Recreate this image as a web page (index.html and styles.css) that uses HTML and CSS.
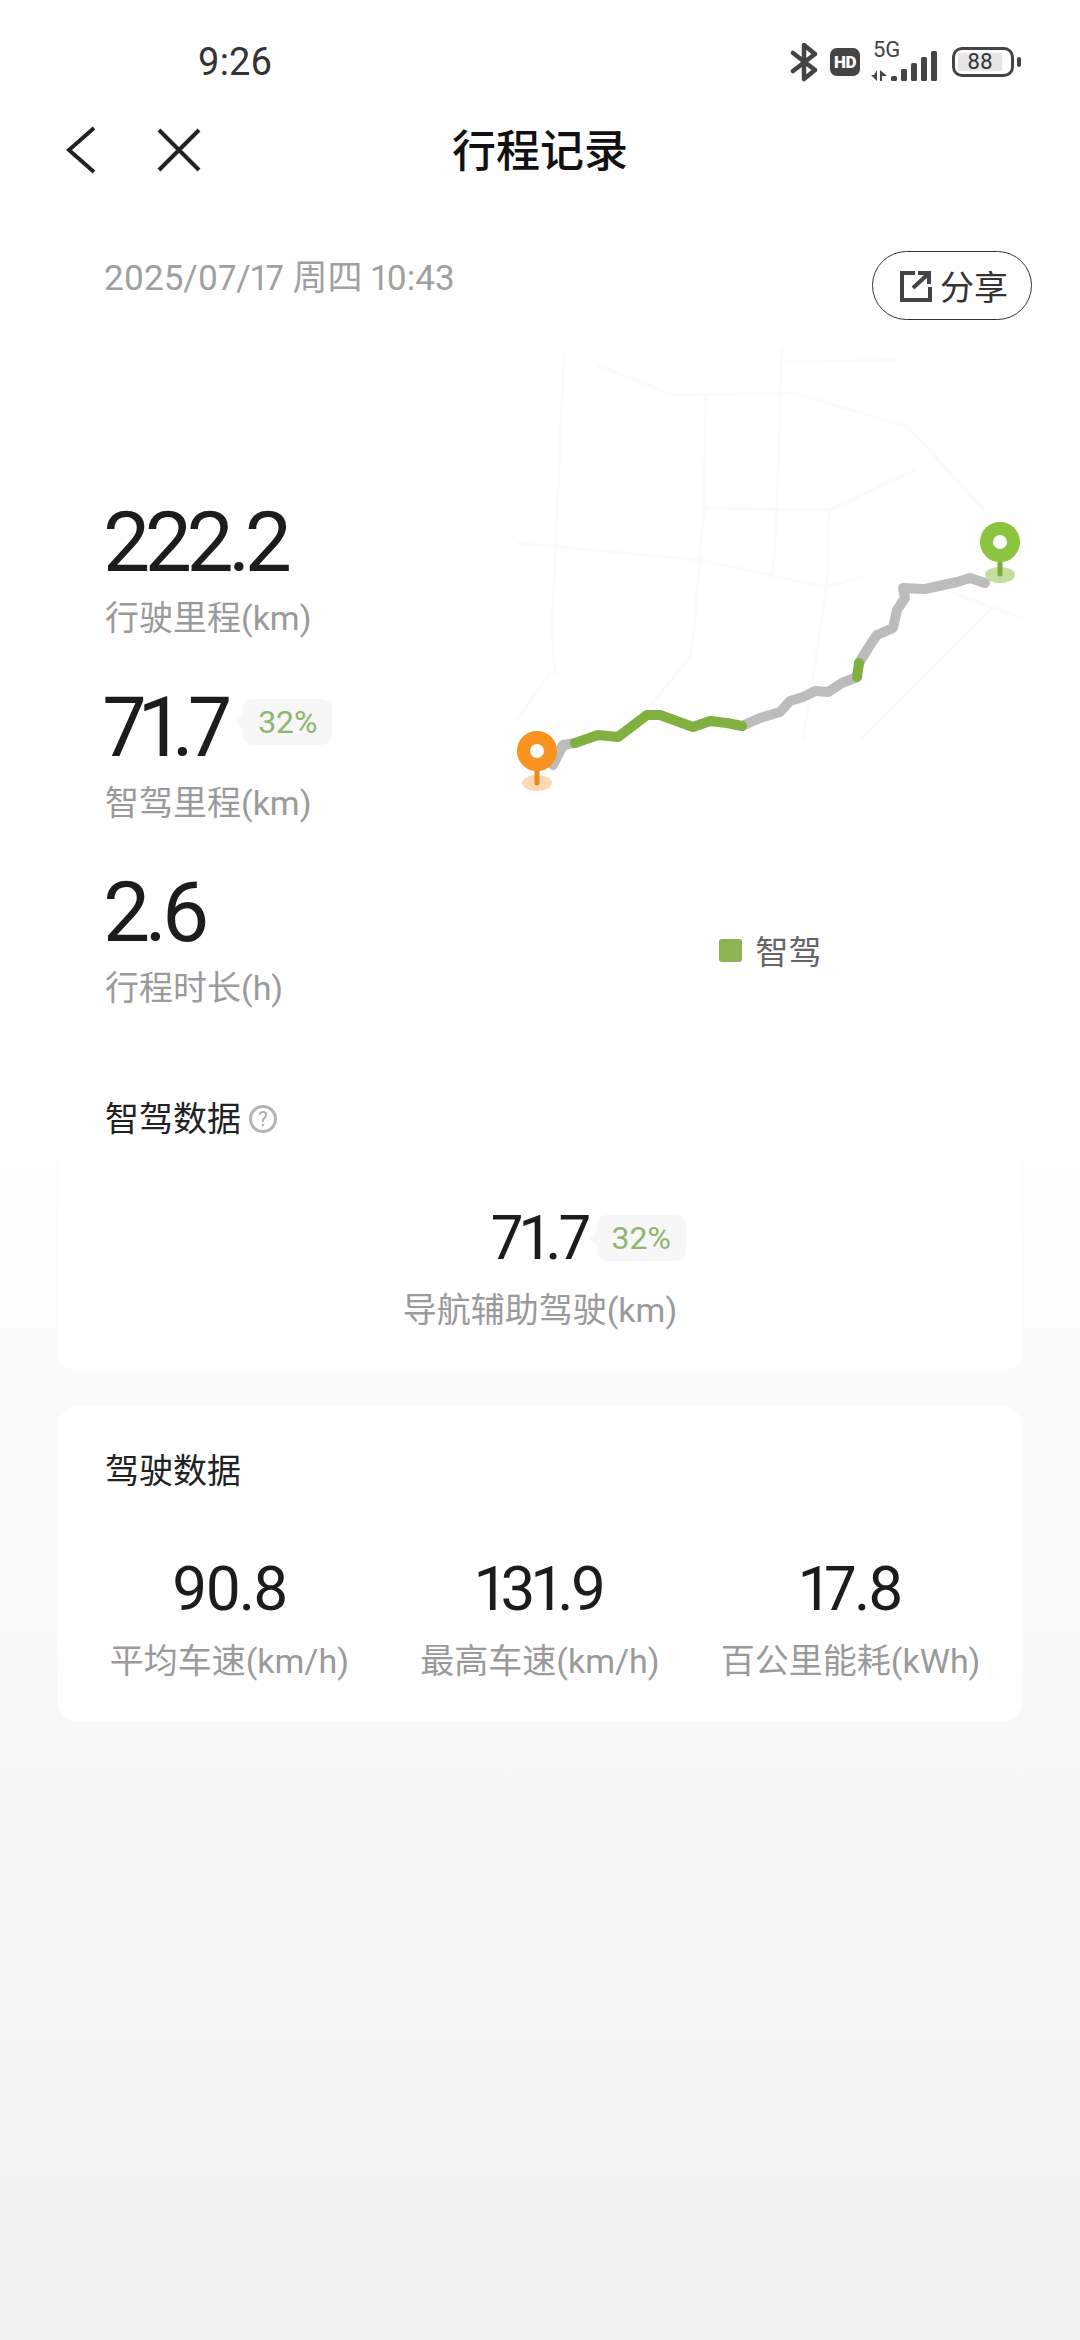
FILE: index.html
```html
<!DOCTYPE html>
<html lang="zh-CN">
<head>
  <meta charset="UTF-8">
  <title>行程记录</title>
  <link rel="stylesheet" href="styles.css">
</head>
<body>
  <div class="page">
    <div class="statusBar">
      <span class="clock">9:26</span>
      <div class="statusIcons">
        <svg class="btIcon" width="28" height="40" viewBox="0 0 28 40">
          <path d="M3 11 L25 28 L14 37 V3 L25 12 L3 29" fill="none" stroke="#444" stroke-width="4.5" stroke-linecap="round" stroke-linejoin="round"/>
        </svg>
        <span class="hdBadge">HD</span>
        <div class="signal">
          <span class="signalLabel">5G</span>
          <svg class="signalBars" width="68" height="32" viewBox="0 0 68 32">
            <path d="M7 20 V31 L1 25 H4 Z M10 20 V31 H12 V26 H17 Z" fill="#444"/>
            <rect x="21" y="26" width="6" height="5" rx="1.5" fill="#444"/>
            <rect x="31" y="19" width="6" height="12" rx="1.5" fill="#444"/>
            <rect x="41" y="13" width="6" height="18" rx="1.5" fill="#444"/>
            <rect x="51" y="7" width="6" height="24" rx="1.5" fill="#444"/>
            <rect x="61" y="1" width="6" height="30" rx="1.5" fill="#444"/>
          </svg>
        </div>
        <div class="battery">
          <div class="batteryBody"><span class="batteryLevel">88</span></div>
          <span class="batteryCap"></span>
        </div>
      </div>
    </div>

    <div class="navBar">
      <div class="navButtons">
        <svg width="30" height="48" viewBox="0 0 30 48">
          <path d="M28 2 L3 24 L28 46" fill="none" stroke="#222" stroke-width="4"/>
        </svg>
        <svg width="44" height="44" viewBox="0 0 44 44">
          <path d="M2 2 L42 42 M42 2 L2 42" fill="none" stroke="#222" stroke-width="4"/>
        </svg>
      </div>
      <div class="navTitle">行程记录</div>
    </div>

    <div class="dateRow">
      <span class="dateText">2025/07/17 周四 10:43</span>
      <div class="shareBtn">
        <svg width="32" height="32" viewBox="0 0 32 32">
          <path d="M15 3 H2 V30 H30 V17" fill="none" stroke="#444" stroke-width="4"/>
          <path d="M13 18 L27 5 M18 3 H29 V14" fill="none" stroke="#444" stroke-width="4"/>
        </svg>
        <span>分享</span>
      </div>
    </div>

    <div class="summary">
      <div class="stats">
        <div class="stat">
          <div class="statValue">222.2</div>
          <div class="statLabel">行驶里程(km)</div>
        </div>
        <div class="stat">
          <div class="statValue">71.7<span class="percentTag">32%</span></div>
          <div class="statLabel">智驾里程(km)</div>
        </div>
        <div class="stat">
          <div class="statValue">2.6</div>
          <div class="statLabel">行程时长(h)</div>
        </div>
      </div>
      <div class="mapCol">
        <svg class="routeMap" width="540" height="560" viewBox="500 340 540 560">
          <g fill="none" stroke="#fafbfb" stroke-width="3">
            <path d="M564 353 L552 630 L555 675 M550 673 L517 720"/>
            <path d="M597 365 L673 395 L794 393 L908 427 L984 510"/>
            <path d="M782 347 L777 507 L773 573 M784 362 L898 360"/>
            <path d="M706 397 L704 507 L694 630 L690 657 L647 710"/>
            <path d="M704 508 L829 510 L915 470 M829 510 L827 587 L803 740"/>
            <path d="M517 543 L700 560 L825 587 L863 577"/>
            <path d="M993 607 L860 740 M953 593 L1020 617"/>
          </g>
          <g class="routeLine" fill="none" stroke-width="10" stroke-linecap="round" stroke-linejoin="round">
            <path stroke="#bcbcbc" d="M553 765 L563 745 L575 743"/>
            <path stroke="#bcbcbc" d="M742 726 L760 718 L780 712 L790 701 L803 697 L815 691 L828 692 L842 683 L857 677"/>
            <path stroke="#bcbcbc" d="M859 663 L872 642 L877 635 L893 628 L897 610 L905 598 L903 588 L925 589 L957 582 L970 578 L985 583"/>
            <path stroke="#7fb040" d="M575 743 L598 735 L618 737 L647 715 L660 715 L693 727 L710 721 L727 723 L742 726"/>
            <path stroke="#7fb040" d="M857 677 L859 663"/>
          </g>
          <ellipse cx="537" cy="783" rx="15" ry="8" fill="#fbd9b4"/>
          <path d="M537 765 V783" stroke="#ea8a1e" stroke-width="5" stroke-linecap="round"/>
          <circle cx="537" cy="751" r="13.5" fill="#fff" stroke="#f7931e" stroke-width="13"/>
          <ellipse cx="1000" cy="575" rx="15" ry="8" fill="#c5de9d"/>
          <path d="M1000 555 V574" stroke="#76a83a" stroke-width="5" stroke-linecap="round"/>
          <circle cx="1000" cy="542" r="13.5" fill="#fff" stroke="#8bc540" stroke-width="13"/>
        </svg>
        <div class="legend">
          <span class="legendDot"></span>
          <span>智驾</span>
        </div>
      </div>
    </div>

    <div class="card cardAssist">
      <div class="cardTitle">
        智驾数据
        <span class="helpIcon">?</span>
      </div>
      <div class="assistBlock">
        <div class="metricValue">71.7<span class="percentTag percentTagSmall">32%</span></div>
        <div class="metricLabel">导航辅助驾驶(km)</div>
      </div>
    </div>

    <div class="card cardDrive">
      <div class="cardTitle">驾驶数据</div>
      <div class="metrics">
        <div class="metric">
          <div class="metricValue">90.8</div>
          <div class="metricLabel">平均车速(km/h)</div>
        </div>
        <div class="metric">
          <div class="metricValue">131.9</div>
          <div class="metricLabel">最高车速(km/h)</div>
        </div>
        <div class="metric">
          <div class="metricValue">17.8</div>
          <div class="metricLabel">百公里能耗(kWh)</div>
        </div>
      </div>
    </div>
  </div>
</body>
</html>
```

FILE: styles.css
```css
* {
  box-sizing: border-box;
}
body {
  margin: 0;
  font-family: Roboto, "Noto Sans CJK SC", sans-serif;
  font-variant-numeric: proportional-nums;
  color: #1c1c1c;
}
.page {
  width: 1080px;
  height: 2340px;
  overflow: hidden;
  background: linear-gradient(#fff 0, #fff 1000px, #f0f2f2 2340px);
}

/* status bar */
.statusBar {
  height: 108px;
  padding: 0 59px 0 198px;
  display: flex;
  justify-content: space-between;
  align-items: flex-start;
}
.clock {
  margin-top: 40px;
  font-size: 38px;
  line-height: 44px;
  color: #333;
}
.statusIcons {
  margin-top: 42px;
  display: flex;
  align-items: center;
}
.btIcon {
  margin-right: 12px;
}
.hdBadge {
  width: 30px;
  height: 28px;
  margin-right: 10px;
  border-radius: 7px;
  background: #444;
  color: #fff;
  font-size: 17px;
  font-weight: 900;
  letter-spacing: -0.5px;
  line-height: 28px;
  text-align: center;
}
.signal {
  width: 68px;
  margin-right: 14px;
  display: flex;
  flex-direction: column;
}
.signalLabel {
  height: 14px;
  padding-left: 3px;
  font-size: 22px;
  line-height: 14px;
  color: #444;
}
.signalBars {
  display: block;
  margin-top: -7px;
}
.battery {
  display: flex;
  align-items: center;
}
.batteryBody {
  width: 62px;
  height: 30px;
  padding: 3px;
  border: 3px solid #444;
  border-radius: 10px;
}
.batteryLevel {
  display: block;
  width: 44px;
  height: 18px;
  background: #e6e6e6;
  font-size: 22px;
  line-height: 18px;
  text-align: center;
  color: #333;
}
.batteryCap {
  width: 4px;
  height: 10px;
  margin-left: 3px;
  border-radius: 2px;
  background: #444;
}

/* nav */
.navBar {
  height: 84px;
  padding-left: 66px;
  display: grid;
  grid-template-columns: 1fr auto 1fr;
  align-items: center;
}
.navBar .navTitle {
  grid-column: 2;
  margin-left: -66px;
  margin-top: -4px;
  font-size: 44px;
  font-weight: 500;
  color: #111;
}
.navButtons {
  display: flex;
  align-items: center;
  gap: 61px;
}

/* date */
.dateRow {
  height: 128px;
  padding: 59px 48px 0 104px;
  display: flex;
  justify-content: space-between;
  align-items: flex-start;
}
.dateText {
  margin-top: 3px;
  font-size: 35px;
  line-height: 50px;
  color: #a0a0a0;
}
.shareBtn {
  width: 160px;
  height: 69px;
  padding-left: 4px;
  border: 1.5px solid #333;
  border-radius: 35px;
  display: flex;
  justify-content: center;
  align-items: center;
  gap: 8px;
  font-size: 34px;
  color: #333;
}

/* summary */
.summary {
  height: 738px;
  margin-top: 20px;
  display: flex;
}
.stats {
  width: 500px;
  padding: 153px 0 0 103px;
  display: flex;
  flex-direction: column;
  gap: 35px;
}
.statValue {
  height: 100px;
  display: flex;
  align-items: center;
  font-size: 84px;
  line-height: 100px;
  letter-spacing: -5.5px;
}
.statLabel {
  height: 50px;
  padding-left: 2px;
  font-size: 34px;
  line-height: 50px;
  color: #9a9a9a;
}
.percentTag {
  position: relative;
  width: 89px;
  height: 46px;
  margin-left: 17px;
  margin-top: -12px;
  border-radius: 10px;
  background: #f6f7f6;
  font-size: 32px;
  line-height: 46px;
  letter-spacing: 0;
  text-align: center;
  color: #8fb56e;
}
.percentTag::before {
  content: "";
  position: absolute;
  left: -5px;
  top: 16px;
  width: 14px;
  height: 14px;
  background: #f6f7f6;
  transform: rotate(45deg);
}
.mapCol {
  width: 540px;
  display: flex;
  flex-direction: column;
  align-items: center;
}
.routeMap {
  display: block;
}
.routeLine {
  filter: blur(0.6px);
}
.legend {
  margin-top: 25px;
  height: 50px;
  display: flex;
  align-items: center;
  gap: 14px;
  font-size: 33px;
  color: #666;
}
.legendDot {
  width: 23px;
  height: 23px;
  border-radius: 3px;
  background: #8ab552;
}

/* cards */
.card {
  width: 964px;
  margin: 0 auto;
  border-radius: 20px;
  background: #fff;
}
.cardAssist {
  height: 293px;
  padding-top: 21px;
}
.cardDrive {
  height: 316px;
  margin-top: 35px;
  padding-top: 45px;
}
.cardTitle {
  height: 40px;
  padding-left: 47px;
  display: flex;
  align-items: center;
  gap: 8px;
  font-size: 34px;
  line-height: 40px;
  color: #222;
}
.helpIcon {
  width: 28px;
  height: 28px;
  border: 3px solid #b4b4b4;
  border-radius: 50%;
  font-size: 20px;
  line-height: 22px;
  text-align: center;
  color: #a8a8a8;
}
.assistBlock {
  margin-top: 69px;
  text-align: center;
}
.assistBlock .metricValue {
  display: flex;
  justify-content: center;
  align-items: center;
}
.metrics {
  margin-top: 68px;
  padding: 0 16px;
  display: grid;
  grid-template-columns: repeat(3, 1fr);
}
.metric {
  text-align: center;
}
.metricValue {
  height: 60px;
  font-size: 62px;
  line-height: 60px;
  letter-spacing: -2.5px;
}
.metricLabel {
  margin-top: 20px;
  height: 44px;
  font-size: 34px;
  line-height: 44px;
  color: #9a9a9a;
}
.percentTagSmall {
  width: 89px;
  margin-left: 8px;
  margin-top: 0;
  margin-right: -97px;
}
```
